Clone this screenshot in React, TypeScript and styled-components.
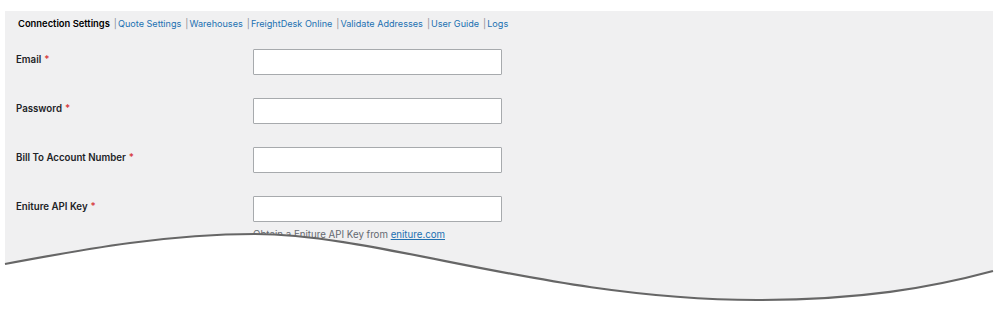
import styled, { createGlobalStyle } from "styled-components";

const GlobalStyle = createGlobalStyle`
  html, body {
    margin: 0;
    padding: 0;
    background: #ffffff;
  }
  body {
    font-family: Inter, "Liberation Sans", Arial, sans-serif;
    color: #1d2327;
  }
`;

type Field = {
  label: string;
  help?: boolean;
};

const tabs = [
  "Quote Settings",
  "Warehouses",
  "FreightDesk Online",
  "Validate Addresses",
  "User Guide",
  "Logs",
];

const fields: Field[] = [
  { label: "Email" },
  { label: "Password" },
  { label: "Bill To Account Number" },
  { label: "Eniture API Key", help: true },
];

const Page = styled.div`
  padding: 11px 7px 0 5px;
  height: 312px;
  box-sizing: border-box;
  overflow: hidden;
`;

const Panel = styled.div`
  position: relative;
  height: 301px;
  background: #f0f0f1;
  padding: 0 0 0 11px;
  box-sizing: border-box;
`;

const Nav = styled.div`
  display: flex;
  align-items: center;
  height: 24px;
  padding-left: 2px;
  font-size: 9.4px;
  white-space: pre;
`;

const Current = styled.span`
  font-weight: 600;
  color: #000;
`;

const Sep = styled.span`
  color: #8c8f94;
  margin: 0 1px 0 4px;
`;

const TabLink = styled.a`
  color: #2271b1;
  text-decoration: none;
  font-size: 9.1px;
`;

const Form = styled.div`
  display: grid;
  grid-template-columns: 237px 249px;
  grid-auto-rows: 49px;
  margin-top: 14px;
`;

const Label = styled.div`
  font-size: 9.7px;
  font-weight: 600;
  color: #1d2327;
  padding-top: 5px;
`;

const Req = styled.span`
  color: #d63638;
  margin-left: 3px;
`;

const Cell = styled.div`
  display: flex;
  flex-direction: column;
`;

const Input = styled.input`
  width: 249px;
  height: 26px;
  box-sizing: border-box;
  border: 1px solid #a7aaad;
  border-radius: 1px;
  background: #fff;
  margin: 0;
  padding: 0 6px;
  outline: none;
`;

const Help = styled.p`
  margin: 7px 0 0;
  font-size: 9.7px;
  color: #646970;
`;

const HelpLink = styled.a`
  color: #2271b1;
  text-decoration: underline;
`;

const Tear = styled.svg`
  position: absolute;
  left: -5px;
  top: 209px;
  width: 1000px;
  height: 92px;
`;

export default function App() {
  return (
    <>
      <GlobalStyle />
      <Page>
        <Panel>
          <Nav>
            <Current>Connection Settings</Current>
            {tabs.map((t) => (
              <span key={t}>
                <Sep>|</Sep>
                <TabLink href="#">{t}</TabLink>
              </span>
            ))}
          </Nav>
          <Form>
            {fields.map((f) => (
              <>
                <Label key={f.label + "l"}>
                  {f.label}
                  <Req>*</Req>
                </Label>
                <Cell key={f.label + "c"}>
                  <Input type="text" />
                  {f.help && (
                    <Help>
                      Obtain a Eniture API Key from{" "}
                      <HelpLink href="#">eniture.com</HelpLink>
                    </Help>
                  )}
                </Cell>
              </>
            ))}
          </Form>
          {/* torn bottom edge, coords: x as page, y = page - 220 */}
          <Tear viewBox="0 0 1000 92">
            <path
              d="M5,44 C90,28 170,14 255,14 C380,14 550,80 757,80 C860,80 930,68 993,51 L1000,51 L1000,92 L0,92 L0,44 Z"
              fill="#ffffff"
            />
            <path
              d="M5,44 C90,28 170,14 255,14 C380,14 550,80 757,80 C860,80 930,68 993,51"
              fill="none"
              stroke="#666666"
              strokeWidth="2.2"
            />
          </Tear>
        </Panel>
      </Page>
    </>
  );
}
